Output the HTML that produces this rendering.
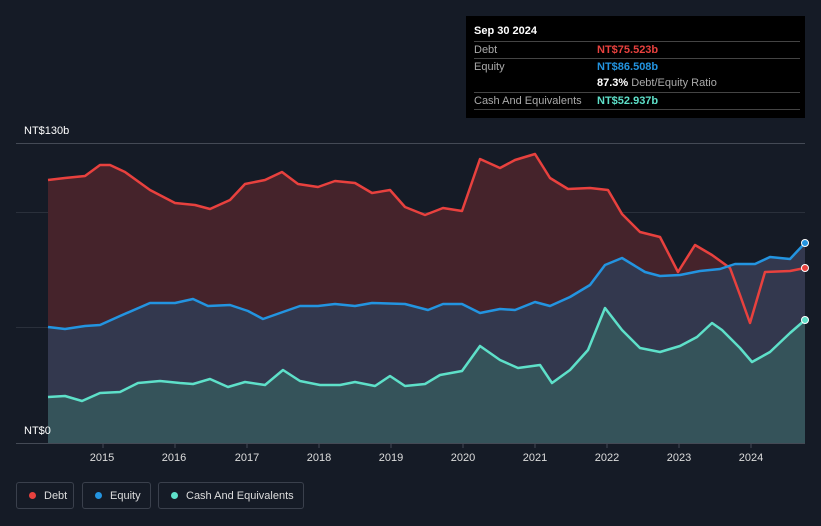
<!DOCTYPE html>
<html><head><style>
body{margin:0;width:821px;height:526px;background:#151b26;font-family:"Liberation Sans",sans-serif;overflow:hidden;position:relative}
.t{position:absolute;font-size:11px;color:#fff;z-index:2}
.tip{position:absolute;left:466px;top:16px;width:339px;height:102px;background:#000}
.tip .r{position:absolute;left:8px;width:326px;border-top:1px solid #444;font-size:11px;color:#aaa;height:16px;line-height:16px}
.tip .v{position:absolute;left:123px;font-weight:bold}
.leg{position:absolute;top:482px;height:27px;border:1px solid #3a404c;border-radius:3px;font-size:11px;color:#ddd;line-height:27px;box-sizing:border-box}
.leg i{display:inline-block;width:7px;height:7px;border-radius:50%;margin:0 8px 0 12px}
</style></head><body>
<div class="tip">
<div style="position:absolute;left:8px;top:9px;color:#fff;font-size:11px;font-weight:bold">Sep 30 2024</div>
<div class="r" style="top:25px">Debt<span class="v" style="color:#e8413e">NT$75.523b</span></div>
<div class="r" style="top:42px">Equity<span class="v" style="color:#2394e0">NT$86.508b</span></div>
<div class="r" style="top:59px;border-top:none"><span class="v" style="color:#fff">87.3% <span style="color:#aaa;font-weight:normal">Debt/Equity Ratio</span></span></div>
<div class="r" style="top:76px">Cash And Equivalents<span class="v" style="color:#5ee0c9">NT$52.937b</span></div>
<div class="r" style="top:93px;height:0"></div>
</div>
<svg width="821" height="526" style="position:absolute;left:0;top:0">
<line x1="16" y1="143.5" x2="805" y2="143.5" stroke="#444a55"/>
<line x1="16" y1="212.5" x2="805" y2="212.5" stroke="#2a303b"/>
<line x1="16" y1="327.5" x2="805" y2="327.5" stroke="#2a303b"/>
<path d="M48,180 L65,178 85,176 100,165 110,165 125,172 150,190 175,203 195,205 210,209 230,200 245,184 265,180 282,172 298,184 318,187 335,181 355,183 372,193 390,190 405,207 425,215 443,208 462,211 480,159 500,168 515,160 535,154 550,178 568,189 590,188 608,190 622,214 640,232 660,237 678,272 695,245 712,255 730,268 740,295 750,323 765,272 790,271 805,268 L805,443 48,443Z" fill="#45232b"/>
<path d="M48,327 L65,329 85,326 100,325 120,316 150,303 175,303 193,299 208,306 230,305 248,311 263,319 280,313 300,306 318,306 335,304 355,306 372,303 405,304 428,310 443,304 462,304 480,313 500,309 515,310 535,302 550,306 570,297 590,285 605,265 622,258 645,272 660,276 680,275 700,271 720,269 735,264 755,264 770,257 790,259 805,243 L805,443 48,443Z" fill="#33384e"/>
<path d="M48,397 L65,396 82,401 100,393 120,392 138,383 160,381 180,383 193,384 210,379 228,387 245,382 265,385 283,370 300,381 320,385 340,385 355,382 375,386 390,376 405,386 425,384 440,375 462,371 480,346 500,360 518,368 540,365 552,383 570,370 588,350 605,308 622,330 640,348 660,352 680,346 697,337 712,323 722,330 740,348 752,362 770,352 790,333 805,320 L805,443 48,443Z" fill="#35535a"/>
<g fill="none" stroke-width="2.5" stroke-linejoin="round">
<path stroke="#e8413e" d="M48,180 L65,178 85,176 100,165 110,165 125,172 150,190 175,203 195,205 210,209 230,200 245,184 265,180 282,172 298,184 318,187 335,181 355,183 372,193 390,190 405,207 425,215 443,208 462,211 480,159 500,168 515,160 535,154 550,178 568,189 590,188 608,190 622,214 640,232 660,237 678,272 695,245 712,255 730,268 740,295 750,323 765,272 790,271 805,268"/>
<path stroke="#2394e0" d="M48,327 L65,329 85,326 100,325 120,316 150,303 175,303 193,299 208,306 230,305 248,311 263,319 280,313 300,306 318,306 335,304 355,306 372,303 405,304 428,310 443,304 462,304 480,313 500,309 515,310 535,302 550,306 570,297 590,285 605,265 622,258 645,272 660,276 680,275 700,271 720,269 735,264 755,264 770,257 790,259 805,243"/>
<path stroke="#5ee0c9" d="M48,397 L65,396 82,401 100,393 120,392 138,383 160,381 180,383 193,384 210,379 228,387 245,382 265,385 283,370 300,381 320,385 340,385 355,382 375,386 390,376 405,386 425,384 440,375 462,371 480,346 500,360 518,368 540,365 552,383 570,370 588,350 605,308 622,330 640,348 660,352 680,346 697,337 712,323 722,330 740,348 752,362 770,352 790,333 805,320"/>
</g>
<circle cx="805" cy="268" r="3.5" fill="#e8413e" stroke="#fff"/>
<circle cx="805" cy="243" r="3.5" fill="#2394e0" stroke="#fff"/>
<circle cx="805" cy="320" r="3.5" fill="#5ee0c9" stroke="#fff"/>
<line x1="16" y1="443.5" x2="805" y2="443.5" stroke="#444a55"/>
<g stroke="#444a55"><line x1="103" y1="443" x2="103" y2="448"/><line x1="175" y1="443" x2="175" y2="448"/><line x1="247" y1="443" x2="247" y2="448"/><line x1="319" y1="443" x2="319" y2="448"/><line x1="391" y1="443" x2="391" y2="448"/><line x1="463" y1="443" x2="463" y2="448"/><line x1="535" y1="443" x2="535" y2="448"/><line x1="607" y1="443" x2="607" y2="448"/><line x1="679" y1="443" x2="679" y2="448"/><line x1="751" y1="443" x2="751" y2="448"/></g>
<g fill="#ddd" font-size="11" font-family="Liberation Sans" text-anchor="middle">
<text x="102" y="461">2015</text><text x="174" y="461">2016</text><text x="247" y="461">2017</text><text x="319" y="461">2018</text><text x="391" y="461">2019</text><text x="463" y="461">2020</text><text x="535" y="461">2021</text><text x="607" y="461">2022</text><text x="679" y="461">2023</text><text x="751" y="461">2024</text>
</g>
</svg>
<div class="t" style="left:24px;top:125px">NT$130b</div>
<div class="t" style="left:24px;top:425px">NT$0</div>
<div class="leg" style="left:16px;width:58px"><i style="background:#e8413e"></i>Debt</div>
<div class="leg" style="left:82px;width:69px"><i style="background:#2394e0"></i>Equity</div>
<div class="leg" style="left:158px;width:146px"><i style="background:#5ee0c9"></i>Cash And Equivalents</div>
</body></html>
